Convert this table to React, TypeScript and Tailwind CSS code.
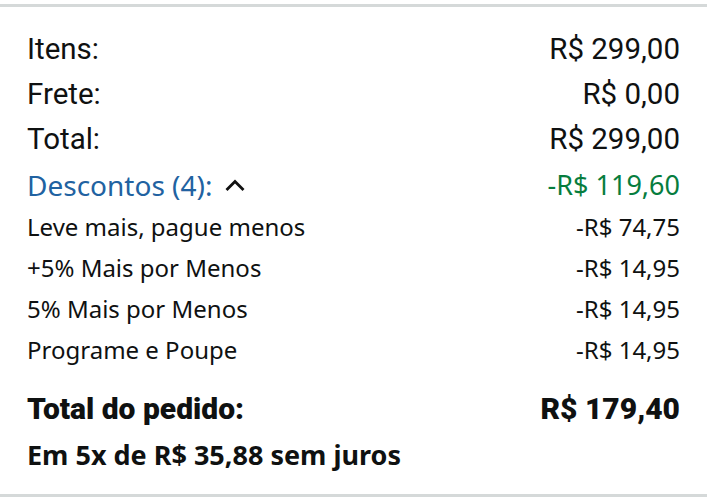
function ChevronUp() {
  return (
    <svg width="22" height="14" viewBox="0 0 22 14" className="ml-3">
      <path d="M2.5 12 L11 3.5 L19.5 12" fill="none" stroke="#111" strokeWidth="2.8" />
    </svg>
  );
}

const subitems = [
  { label: "Leve mais, pague menos", value: "-R$ 74,75" },
  { label: "+5% Mais por Menos", value: "-R$ 14,95" },
  { label: "5% Mais por Menos", value: "-R$ 14,95" },
  { label: "Programe e Poupe", value: "-R$ 14,95" },
];

export default function App() {
  return (
    <div className="w-[707px] h-[500px] bg-white pt-1 overflow-hidden">
      <div className="h-[493px] border-t-[3px] border-b-[3px] border-[#d5d9d9] px-[27px] pt-[20px] text-[#0f1111]">
        <div className="font-['Roboto',sans-serif] text-[29.5px]">
          <div className="flex justify-between h-[45px] items-center">
            <span>Itens:</span>
            <span>R$ 299,00</span>
          </div>
          <div className="flex justify-between h-[45px] items-center">
            <span>Frete:</span>
            <span>R$ 0,00</span>
          </div>
          <div className="flex justify-between h-[45px] items-center">
            <span>Total:</span>
            <span>R$ 299,00</span>
          </div>
        </div>
        <div className="flex justify-between h-[46px] items-center font-['Noto_Sans',sans-serif] text-[28px]">
          <span className="flex items-center text-[#2162a1]">
            Descontos (4):
            <ChevronUp />
          </span>
          <span className="text-[#067d3e] text-[27px]">-R$ 119,60</span>
        </div>
        <div className="font-['Noto_Sans',sans-serif] text-[24px] -mt-[2px]">
          {subitems.map((s) => (
            <div key={s.label} className="flex justify-between h-[41px] items-center">
              <span>{s.label}</span>
              <span>{s.value}</span>
            </div>
          ))}
        </div>
        <div className="mt-[16px] flex justify-between h-[44px] items-center font-['Roboto',sans-serif] font-black text-[30px]">
          <span>Total do pedido:</span>
          <span>R$ 179,40</span>
        </div>
        <div className="mt-[2px] h-[46px] flex items-center font-['Noto_Sans',sans-serif] font-bold text-[27px]">
          Em 5x de R$ 35,88 sem juros
        </div>
      </div>
    </div>
  );
}
